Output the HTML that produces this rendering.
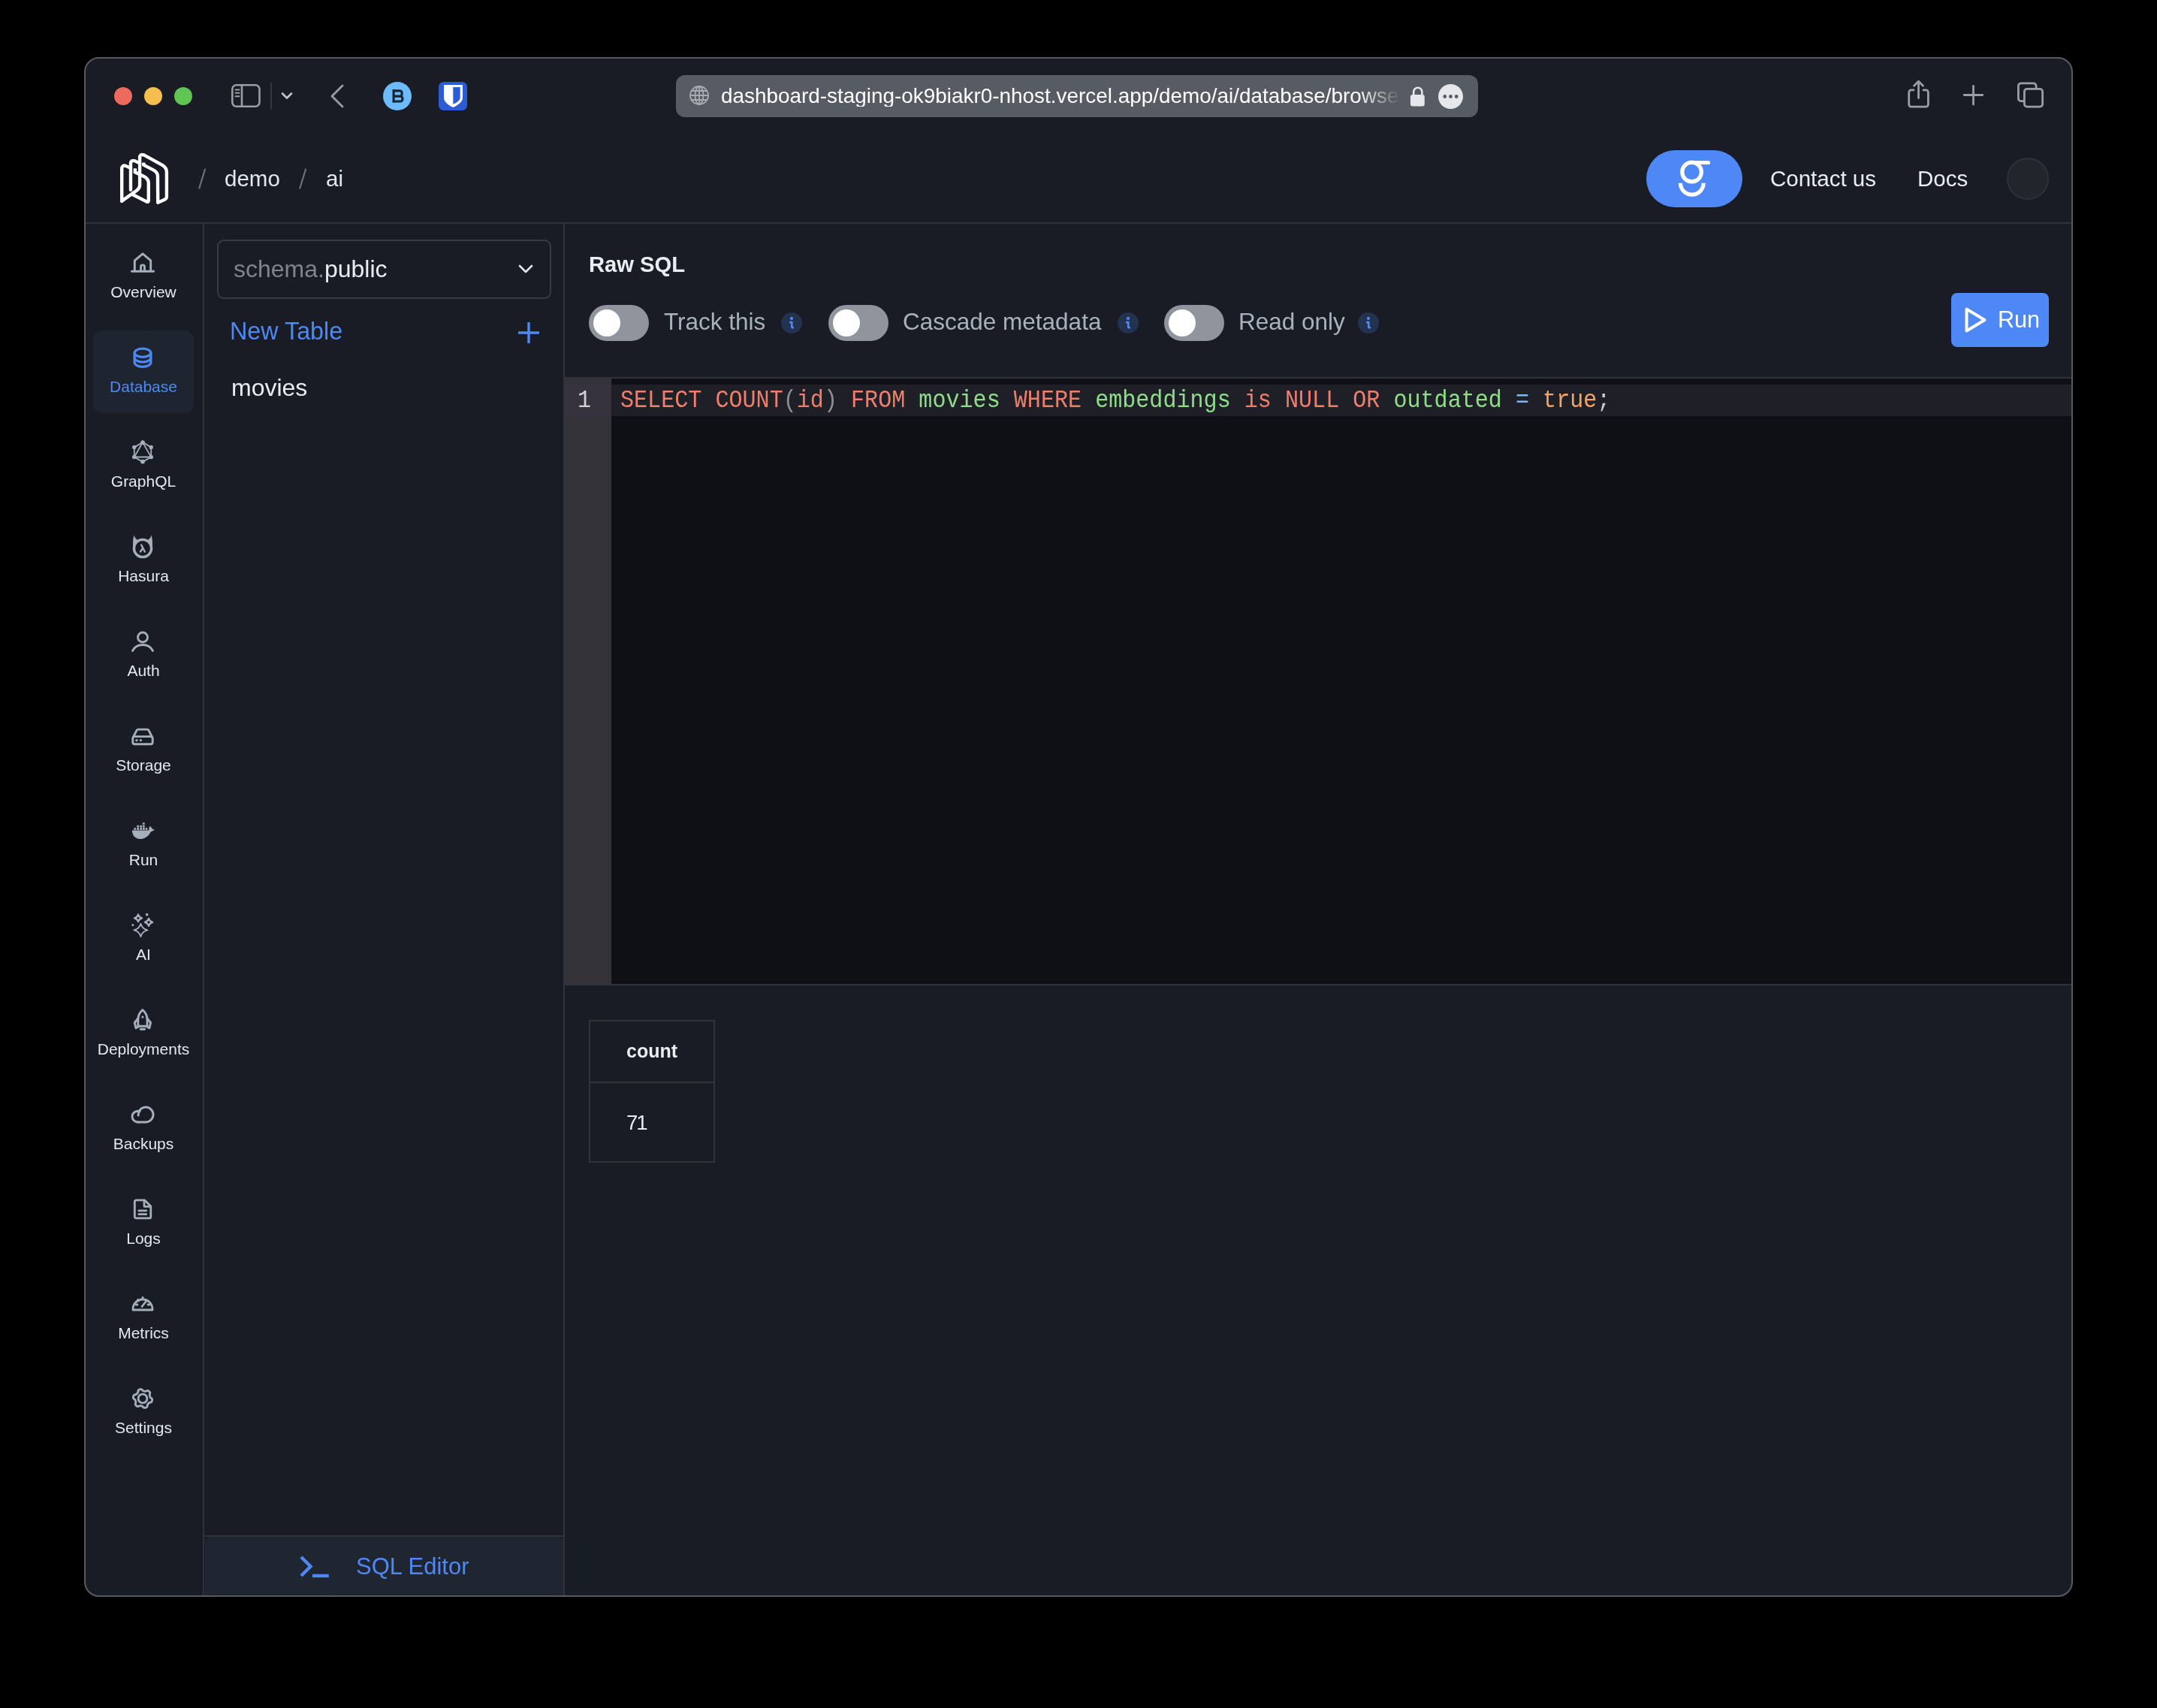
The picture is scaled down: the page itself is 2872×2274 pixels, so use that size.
<!DOCTYPE html>
<html><head><meta charset="utf-8"><style>
html,body{margin:0;padding:0;background:#000;width:2872px;height:2274px;overflow:hidden;position:relative;font-family:'Liberation Sans', sans-serif}
</style></head><body>
<div style="position:absolute;left:112px;top:76px;width:2648px;height:2050px;background:#191c25;border-radius:20px"></div>
<div style="position:absolute;left:152px;top:116px;width:24px;height:24px;background:#ec6a5e;border-radius:50%"></div>
<div style="position:absolute;left:192px;top:116px;width:24px;height:24px;background:#f4bf4f;border-radius:50%"></div>
<div style="position:absolute;left:232px;top:116px;width:24px;height:24px;background:#61c554;border-radius:50%"></div>
<svg style="position:absolute;left:300px;top:100px;" width="60" height="60" viewBox="0 0 60 60" fill="none"><rect x="9.3" y="13.3" width="36.2" height="28.4" rx="5.5" stroke="#9a9da3" stroke-width="2.6"/><line x1="22" y1="13" x2="22" y2="42" stroke="#9a9da3" stroke-width="2.6"/><path d="M13.5 19.6h5M13.5 23.8h5M13.5 28.2h5" stroke="#9a9da3" stroke-width="2" stroke-linecap="round"/></svg>
<div style="position:absolute;left:360px;top:110px;width:2px;height:36px;background:#34373d"></div>
<svg style="position:absolute;left:370px;top:118px;" width="24" height="20" viewBox="0 0 24 20" fill="none"><path d="M6 6.5l6 6 6-6" stroke="#c3c5ca" stroke-width="2.6" stroke-linecap="round" stroke-linejoin="round"/></svg>
<svg style="position:absolute;left:430px;top:105px;" width="40" height="46" viewBox="0 0 40 46" fill="none"><path d="M26 9L12 23l14 14" stroke="#9a9da3" stroke-width="2.8" stroke-linecap="round" stroke-linejoin="round"/></svg>
<div style="position:absolute;left:510px;top:109px;width:38px;height:38px;background:#6cbcfd;border-radius:50%"></div>
<svg style="position:absolute;left:510px;top:109px;" width="38" height="38" viewBox="0 0 38 38" fill="none"><path d="M14.1 10V27.8M14.1 11.8H22.3a2.8 2.8 0 0 1 2.8 2.8v1.8a2.8 2.8 0 0 1-2.8 2.8H14.1M14.1 19.2H23.1a2.8 2.8 0 0 1 2.8 2.8v1.2a2.8 2.8 0 0 1-2.8 2.8H14.1" stroke="#1c2232" stroke-width="3.2" fill="none"/></svg>
<svg style="position:absolute;left:584px;top:109px;" width="38" height="38" viewBox="0 0 38 38" fill="none"><rect width="38" height="38" rx="6.5" fill="#2d5bd6"/><path d="M7 4H32V21C32 27 25 31.5 19.3 34C13.6 31.5 7 27 7 21Z" fill="#fff"/><path d="M19.3 7.1H28.7V20.8C28.7 25 23.5 28 19.3 29.8Z" fill="#2d5bd6"/></svg>
<div style="position:absolute;left:900px;top:100px;width:1068px;height:56px;background:#575b64;border-radius:12px"></div>
<svg style="position:absolute;left:916px;top:112px;" width="30" height="30" viewBox="0 0 30 30" fill="none"><g stroke="#a9acb1" stroke-width="1.8"><circle cx="15" cy="15" r="12"/><ellipse cx="15" cy="15" rx="5.5" ry="12"/><path d="M3 15h24M5 9h20M5 21h20M15 3v24"/></g></svg>
<div style="position:absolute;left:960px;top:114.38px;font-size:27.9px;line-height:27.9px;font-weight:400;color:#ffffff;font-family:'Liberation Sans', sans-serif;white-space:nowrap;will-change:transform;width:905px;overflow:hidden;-webkit-mask-image:linear-gradient(90deg,#000 0,#000 848px,transparent 905px)">dashboard-staging-ok9biakr0-nhost.vercel.app/demo/ai/database/browser</div>
<svg style="position:absolute;left:1874px;top:112px;" width="26" height="32" viewBox="0 0 26 32" fill="none"><path d="M8.2 14.5v-4.2a5.6 5.6 0 0 1 11.2 0v4.2" stroke="#e6e7ea" stroke-width="2.5"/><rect x="4" y="14" width="18.8" height="15.5" rx="3" fill="#e6e7ea"/></svg>
<svg style="position:absolute;left:1915px;top:112px;" width="33" height="33" viewBox="0 0 33 33" fill="none"><circle cx="16.5" cy="16.5" r="16.5" fill="#e6e7ea"/><circle cx="8.8" cy="16.5" r="2.4" fill="#575b64"/><circle cx="16.5" cy="16.5" r="2.4" fill="#575b64"/><circle cx="24.2" cy="16.5" r="2.4" fill="#575b64"/></svg>
<svg style="position:absolute;left:2530px;top:100px;" width="50" height="50" viewBox="0 0 50 50" fill="none"><g stroke="#9a9da3" stroke-width="2.8" stroke-linecap="round" stroke-linejoin="round" fill="none"><path d="M18 19.9h-3.3a3 3 0 0 0-3 3v16.2a3 3 0 0 0 3 3h19.7a3 3 0 0 0 3-3v-16.2a3 3 0 0 0-3-3H31"/><path d="M24.5 30.5V8.5M18.5 14.3l6-6 6 6"/></g></svg>
<svg style="position:absolute;left:2605px;top:105px;" width="45" height="45" viewBox="0 0 45 45" fill="none"><path d="M22.5 9.5v24.5M10.2 21.5h24.5" stroke="#9a9da3" stroke-width="2.8" stroke-linecap="round"/></svg>
<svg style="position:absolute;left:2680px;top:103px;" width="50" height="50" viewBox="0 0 50 50" fill="none"><g stroke="#9a9da3" stroke-width="2.8" fill="none" stroke-linejoin="round"><path d="M15.4 31.6H10.9a3.5 3.5 0 0 1-3.5-3.5V11.4a3.5 3.5 0 0 1 3.5-3.5H27.6a3.5 3.5 0 0 1 3.5 3.5V15.4"/><rect x="15.4" y="15.4" width="24.2" height="23.7" rx="3.5"/></g></svg>
<div style="position:absolute;left:114px;top:296px;width:2644px;height:2px;background:#30333b"></div>
<svg style="position:absolute;left:150px;top:195px;" width="85" height="85" viewBox="0 0 1708 1708" fill="none"><g stroke="#fff" stroke-width="88" stroke-linejoin="round" fill="none"><g stroke-linecap="round"><path d="M245 1460 L245 600 Q245 490 350 520 L470 575"/><path d="M482 1160 L482 460 Q482 355 590 385 L700 440"/><path d="M245 1460 L640 1180 Q725 1120 725 1040 L725 300 Q725 195 840 230 L1330 500 Q1445 565 1445 690 L1445 1340 Q1445 1390 1400 1415 L1210 1500 L1205 800 Q1205 690 1100 635 L830 495"/><path d="M600 690 L840 805 Q960 865 960 985 L960 1450 Q960 1500 905 1475 L545 1290"/></g><path d="M830 500 L830 430 M600 700 L600 590" stroke-linecap="butt"/></g></svg>
<svg style="position:absolute;left:260px;top:220px;" width="20" height="36" viewBox="0 0 20 36" fill="none"><path d="M13 5.5L5.3 30.5" stroke="#6b7079" stroke-width="2.2" stroke-linecap="round"/></svg>
<div style="position:absolute;left:299px;top:223.03px;font-size:29.5px;line-height:29.5px;font-weight:400;color:#dfe7f1;font-family:'Liberation Sans', sans-serif;white-space:nowrap;will-change:transform;">demo</div>
<svg style="position:absolute;left:394px;top:220px;" width="20" height="36" viewBox="0 0 20 36" fill="none"><path d="M13 5.5L5.3 30.5" stroke="#6b7079" stroke-width="2.2" stroke-linecap="round"/></svg>
<div style="position:absolute;left:433.5px;top:223.03px;font-size:29.5px;line-height:29.5px;font-weight:400;color:#dfe7f1;font-family:'Liberation Sans', sans-serif;white-space:nowrap;will-change:transform;">ai</div>
<div style="position:absolute;left:2192px;top:200px;width:128px;height:76px;background:#4e87f6;border-radius:38px"></div>
<svg style="position:absolute;left:2220px;top:205px;" width="70" height="70" viewBox="0 0 70 70" fill="none"><g stroke="#fff" stroke-width="5.2" fill="none"><circle cx="32.6" cy="24" r="12.8"/><path d="M32.6 11.5H54.5" stroke-linecap="round"/><path d="M17.4 38.8a15.4 15.4 0 0 0 30.8 0"/></g></svg>
<div style="position:absolute;left:2356.5px;top:223.03px;font-size:29.5px;line-height:29.5px;font-weight:400;color:#e6edf5;font-family:'Liberation Sans', sans-serif;white-space:nowrap;will-change:transform;">Contact us</div>
<div style="position:absolute;left:2553px;top:223.03px;font-size:29.5px;line-height:29.5px;font-weight:400;color:#e6edf5;font-family:'Liberation Sans', sans-serif;white-space:nowrap;will-change:transform;">Docs</div>
<div style="position:absolute;left:2672px;top:210px;width:56px;height:56px;background:#22252c;border:2px solid #2f3238;border-radius:50%;box-sizing:border-box"></div>
<div style="position:absolute;left:270px;top:298px;width:2px;height:1826px;background:#30333b"></div>
<div style="position:absolute;left:124px;top:440px;width:134px;height:110px;background:#1e2531;border-radius:12px"></div>
<div style="position:absolute;left:112.5px;width:156px;top:378.22px;font-size:21px;line-height:21px;text-align:center;color:#e2e8ef;font-family:'Liberation Sans', sans-serif;white-space:nowrap;will-change:transform">Overview</div>
<div style="position:absolute;left:112.5px;width:156px;top:504.22px;font-size:21px;line-height:21px;text-align:center;color:#4f88f5;font-family:'Liberation Sans', sans-serif;white-space:nowrap;will-change:transform">Database</div>
<div style="position:absolute;left:112.5px;width:156px;top:630.22px;font-size:21px;line-height:21px;text-align:center;color:#e2e8ef;font-family:'Liberation Sans', sans-serif;white-space:nowrap;will-change:transform">GraphQL</div>
<div style="position:absolute;left:112.5px;width:156px;top:756.22px;font-size:21px;line-height:21px;text-align:center;color:#e2e8ef;font-family:'Liberation Sans', sans-serif;white-space:nowrap;will-change:transform">Hasura</div>
<div style="position:absolute;left:112.5px;width:156px;top:882.22px;font-size:21px;line-height:21px;text-align:center;color:#e2e8ef;font-family:'Liberation Sans', sans-serif;white-space:nowrap;will-change:transform">Auth</div>
<div style="position:absolute;left:112.5px;width:156px;top:1008.22px;font-size:21px;line-height:21px;text-align:center;color:#e2e8ef;font-family:'Liberation Sans', sans-serif;white-space:nowrap;will-change:transform">Storage</div>
<div style="position:absolute;left:112.5px;width:156px;top:1134.22px;font-size:21px;line-height:21px;text-align:center;color:#e2e8ef;font-family:'Liberation Sans', sans-serif;white-space:nowrap;will-change:transform">Run</div>
<div style="position:absolute;left:112.5px;width:156px;top:1260.22px;font-size:21px;line-height:21px;text-align:center;color:#e2e8ef;font-family:'Liberation Sans', sans-serif;white-space:nowrap;will-change:transform">AI</div>
<div style="position:absolute;left:112.5px;width:156px;top:1386.22px;font-size:21px;line-height:21px;text-align:center;color:#e2e8ef;font-family:'Liberation Sans', sans-serif;white-space:nowrap;will-change:transform">Deployments</div>
<div style="position:absolute;left:112.5px;width:156px;top:1512.22px;font-size:21px;line-height:21px;text-align:center;color:#e2e8ef;font-family:'Liberation Sans', sans-serif;white-space:nowrap;will-change:transform">Backups</div>
<div style="position:absolute;left:112.5px;width:156px;top:1638.22px;font-size:21px;line-height:21px;text-align:center;color:#e2e8ef;font-family:'Liberation Sans', sans-serif;white-space:nowrap;will-change:transform">Logs</div>
<div style="position:absolute;left:112.5px;width:156px;top:1764.22px;font-size:21px;line-height:21px;text-align:center;color:#e2e8ef;font-family:'Liberation Sans', sans-serif;white-space:nowrap;will-change:transform">Metrics</div>
<div style="position:absolute;left:112.5px;width:156px;top:1890.22px;font-size:21px;line-height:21px;text-align:center;color:#e2e8ef;font-family:'Liberation Sans', sans-serif;white-space:nowrap;will-change:transform">Settings</div>
<svg style="position:absolute;left:174px;top:334px;" width="32" height="32" viewBox="0 0 32 32" fill="none"><path d="M5.3 27V12.8L16 3.8l10.7 9V27" stroke="#a5afbb" stroke-width="2.9" stroke-linejoin="round" fill="none"/><path d="M1.5 27.2h29" stroke="#a5afbb" stroke-width="2.9" stroke-linecap="round"/><path d="M13.5 27V21.2Q13.5 18.9 15.5 18.9H16.4Q18.4 18.9 18.4 21.2V27" stroke="#a5afbb" stroke-width="2.9" fill="none"/></svg>
<svg style="position:absolute;left:174px;top:460px;" width="32" height="32" viewBox="0 0 32 32" fill="none"><g stroke="#4f88f5" stroke-width="3.2" fill="none"><ellipse cx="16" cy="9.8" rx="10.9" ry="5.6"/><path d="M5.1 9.8V22.6a10.9 5.7 0 0 0 21.8 0V9.8"/><path d="M5.1 16.3a10.9 5.7 0 0 0 21.8 0"/></g></svg>
<svg style="position:absolute;left:174px;top:586px;" width="32" height="32" viewBox="0 0 32 32" fill="none"><g stroke="#a5afbb" stroke-width="1.8" fill="none"><path d="M16 2.9L27.2 9.5V22.5L16 28.9 4.8 22.5V9.5z"/><path d="M16 2.9L27.2 22.5H4.8z"/></g><g fill="#a5afbb"><circle cx="16" cy="3.2" r="2.9"/><circle cx="27.2" cy="9.5" r="2.7"/><circle cx="27.2" cy="22.5" r="2.8"/><circle cx="16" cy="28.6" r="2.9"/><circle cx="4.8" cy="22.5" r="2.8"/><circle cx="4.8" cy="9.5" r="2.7"/></g></svg>
<svg style="position:absolute;left:174px;top:712px;" width="32" height="32" viewBox="0 0 32 32" fill="none"><circle cx="16" cy="18" r="11.6" stroke="#a5afbb" stroke-width="3.4" fill="none"/><path d="M4.5 0.5C3 5 2.8 11 3.2 17.5L10.5 7.5C7.5 6.5 5.5 4 4.5 0.5Z M27.5 0.5C29 5 29.2 11 28.8 17.5L21.5 7.5C24.5 6.5 26.5 4 27.5 0.5Z" fill="#a5afbb"/><path d="M13 22.5l3.2-5M14.2 13.5l4.6 9" stroke="#a5afbb" stroke-width="2.4" stroke-linecap="round"/></svg>
<svg style="position:absolute;left:174px;top:838px;" width="32" height="32" viewBox="0 0 32 32" fill="none"><g stroke="#a5afbb" stroke-width="2.8" fill="none" stroke-linecap="round"><circle cx="16" cy="10.5" r="6.5"/><path d="M2.5 28.5C5 23.5 10 20.5 16 20.5s11 3 13.5 8"/></g></svg>
<svg style="position:absolute;left:174px;top:964px;" width="32" height="32" viewBox="0 0 32 32" fill="none"><g stroke="#a5afbb" stroke-width="2.9" fill="none" stroke-linejoin="round"><path d="M3.6 17L8 8.4a2.4 2.4 0 0 1 2.1-1.3H21.9a2.4 2.4 0 0 1 2.1 1.3L28.4 17"/><rect x="2.8" y="16.6" width="26.4" height="10.2" rx="2.6"/></g><circle cx="8" cy="21.6" r="1.7" fill="#a5afbb"/><circle cx="13.4" cy="21.6" r="1.7" fill="#a5afbb"/></svg>
<svg style="position:absolute;left:174px;top:1090px;" width="32" height="32" viewBox="0 0 32 32" fill="none"><path d="M1.9 15.6H24C24.5 13 24.8 11 25.5 9.8C27 11 28.5 12.5 29 14C30 14 31 14 31.8 14.2C30.5 16 28.5 17 26.9 17.2C24 23.5 18 27.1 12.4 27.1C6 27.1 2 22 1.9 15.6Z" fill="#a5afbb"/><g fill="#a5afbb"><rect x="4.4" y="12.1" width="2.6" height="2.8"/><rect x="8.2" y="12.1" width="2.8" height="2.8"/><rect x="12.2" y="12.1" width="2.8" height="2.8"/><rect x="15.9" y="12.1" width="2.8" height="2.8"/><rect x="19.7" y="12.1" width="2.6" height="2.8"/><rect x="8.2" y="8.8" width="2.8" height="2.8"/><rect x="12.2" y="8.8" width="2.8" height="2.8"/><rect x="15.9" y="8.8" width="2.8" height="2.8"/><rect x="15.9" y="5.3" width="2.8" height="2.6"/></g></svg>
<svg style="position:absolute;left:174px;top:1216px;" width="32" height="32" viewBox="0 0 32 32" fill="none"><g stroke="#a5afbb" stroke-width="1.9" fill="none" stroke-linejoin="round"><path d="M13.4 13.799999999999999Q15.200000000000001 20.68 22.4 22.4Q15.200000000000001 24.119999999999997 13.4 31.0Q11.6 24.119999999999997 4.4 22.4Q11.6 20.68 13.4 13.799999999999999Z"/><path d="M10 1.5999999999999996Q11.1 5.266 15.0 6.3Q11.1 7.334 10 11.0Q8.9 7.334 5.0 6.3Q8.9 5.266 10 1.5999999999999996Z" stroke-width="2.4"/><path d="M24 6.9Q25.144 10.8 29.2 11.9Q25.144 13.0 24 16.9Q22.856 13.0 18.8 11.9Q22.856 10.8 24 6.9Z" stroke-width="2.2"/></g><circle cx="21.6" cy="1.7" r="1.8" fill="#a5afbb"/><circle cx="2.9" cy="15.5" r="1.5" fill="#a5afbb"/></svg>
<svg style="position:absolute;left:174px;top:1342px;" width="32" height="32" viewBox="0 0 32 32" fill="none"><g stroke="#a5afbb" stroke-width="2.9" fill="none" stroke-linejoin="round" stroke-linecap="round"><path d="M15.9 2.6C11.5 6 9.8 10.5 9.8 16V24.3H22V16C22 10.5 20.3 6 15.9 2.6Z"/><path d="M9.8 14L5.2 19.5 7 26.8 11 24.3M22 14L26.6 19.5 24.8 26.8 20.8 24.3"/><path d="M13.2 28.3H18.6"/></g><circle cx="15.9" cy="12" r="1.6" fill="#a5afbb"/></svg>
<svg style="position:absolute;left:174px;top:1468px;" width="32" height="32" viewBox="0 0 32 32" fill="none"><g stroke="#a5afbb" stroke-width="3" fill="none" stroke-linecap="round" stroke-linejoin="round"><path d="M9.5 26H20C25.5 26 30 21.5 30 16C30 10.5 25.5 6 20 6C15 6 11 9.6 10.5 13.8C10.3 15 10.2 16 10.2 16.9"/><path d="M9.5 26C5.4 26 2 22.6 2 18.5C2 14.4 5.4 11.5 9.5 11.2C10.5 11.2 11.3 11.3 12.2 11.6"/></g></svg>
<svg style="position:absolute;left:174px;top:1594px;" width="32" height="32" viewBox="0 0 32 32" fill="none"><g stroke="#a5afbb" stroke-width="2.8" fill="none" stroke-linejoin="round"><path d="M7.3 3.8h11.2l8.3 8.3V25.9a2 2 0 0 1-2 2H7.3a2 2 0 0 1-2-2V5.8a2 2 0 0 1 2-2z"/><path d="M18 3.8v8.5h8.5"/><path d="M10.8 17.8h10M10.8 22.6h10" stroke-linecap="round"/></g></svg>
<svg style="position:absolute;left:174px;top:1720px;" width="32" height="32" viewBox="0 0 32 32" fill="none"><g stroke="#a5afbb" stroke-width="2.8" fill="none" stroke-linecap="round" stroke-linejoin="round"><path d="M3 23a13 13 0 1 1 26 0v1H3z"/><path d="M15 19.5l5.5-7"/><path d="M7 17h2M23 17h2M16 7.5v2M9.5 10.5l1.3 1.3"/></g></svg>
<svg style="position:absolute;left:174px;top:1846px;" width="32" height="32" viewBox="0 0 32 32" fill="none"><g stroke="#a5afbb" stroke-width="2.9" fill="none" stroke-linejoin="round"><path d="M28.07 16.00 L28.37 16.43 L28.53 16.88 L28.59 17.32 L28.59 17.77 L28.55 18.21 L28.47 18.65 L28.36 19.08 L28.22 19.50 L28.04 19.91 L27.80 20.29 L27.47 20.63 L27.03 20.91 L26.46 21.10 L25.85 21.24 L25.29 21.36 L24.84 21.53 L24.49 21.73 L24.20 21.96 L23.95 22.21 L23.70 22.47 L23.47 22.72 L23.24 22.99 L23.01 23.25 L22.78 23.54 L22.58 23.85 L22.42 24.22 L22.31 24.68 L22.24 25.25 L22.17 25.87 L22.04 26.45 L21.81 26.92 L21.50 27.29 L21.15 27.57 L20.76 27.79 L20.36 27.97 L19.94 28.13 L19.51 28.25 L19.08 28.34 L18.63 28.38 L18.18 28.37 L17.72 28.25 L17.26 28.00 L16.81 27.61 L16.39 27.15 L16.00 26.73 L15.64 26.42 L15.29 26.22 L14.94 26.08 L14.60 25.99 L14.25 25.91 L13.91 25.83 L13.57 25.76 L13.22 25.69 L12.87 25.64 L12.50 25.63 L12.09 25.67 L11.64 25.80 L11.11 26.03 L10.53 26.28 L9.96 26.45 L9.44 26.49 L8.98 26.41 L8.56 26.24 L8.17 26.02 L7.81 25.76 L7.47 25.48 L7.15 25.17 L6.85 24.83 L6.59 24.47 L6.38 24.07 L6.25 23.62 L6.23 23.09 L6.35 22.51 L6.54 21.91 L6.71 21.36 L6.79 20.90 L6.79 20.49 L6.74 20.12 L6.65 19.78 L6.55 19.44 L6.44 19.11 L6.33 18.77 L6.21 18.44 L6.08 18.11 L5.91 17.78 L5.67 17.45 L5.33 17.12 L4.87 16.78 L4.36 16.41 L3.93 16.00 L3.63 15.57 L3.47 15.12 L3.41 14.68 L3.41 14.23 L3.45 13.79 L3.53 13.35 L3.64 12.92 L3.78 12.50 L3.96 12.09 L4.20 11.71 L4.53 11.37 L4.97 11.09 L5.54 10.90 L6.15 10.76 L6.71 10.64 L7.16 10.47 L7.51 10.27 L7.80 10.04 L8.05 9.79 L8.30 9.53 L8.53 9.28 L8.76 9.01 L8.99 8.75 L9.22 8.46 L9.42 8.15 L9.58 7.78 L9.69 7.32 L9.76 6.75 L9.83 6.13 L9.96 5.55 L10.19 5.08 L10.50 4.71 L10.85 4.43 L11.24 4.21 L11.64 4.03 L12.06 3.87 L12.49 3.75 L12.92 3.66 L13.37 3.62 L13.82 3.63 L14.28 3.75 L14.74 4.00 L15.19 4.39 L15.61 4.85 L16.00 5.27 L16.36 5.58 L16.71 5.78 L17.06 5.92 L17.40 6.01 L17.75 6.09 L18.09 6.17 L18.43 6.24 L18.78 6.31 L19.13 6.36 L19.50 6.37 L19.91 6.33 L20.36 6.20 L20.89 5.97 L21.47 5.72 L22.04 5.55 L22.56 5.51 L23.02 5.59 L23.44 5.76 L23.83 5.98 L24.19 6.24 L24.53 6.52 L24.85 6.83 L25.15 7.17 L25.41 7.53 L25.62 7.93 L25.75 8.38 L25.77 8.91 L25.65 9.49 L25.46 10.09 L25.29 10.64 L25.21 11.10 L25.21 11.51 L25.26 11.88 L25.35 12.22 L25.45 12.56 L25.56 12.89 L25.67 13.23 L25.79 13.56 L25.92 13.89 L26.09 14.22 L26.33 14.55 L26.67 14.88 L27.13 15.22 L27.64 15.59Z"/><circle cx="16" cy="16" r="5.9"/></g></svg>
<div style="position:absolute;left:750px;top:298px;width:2px;height:1826px;background:#30333b"></div>
<div style="position:absolute;left:288.5px;top:318.5px;width:445.5px;height:79.0px;border:2px solid #383b42;border-radius:9px;box-sizing:border-box"></div>
<div style="position:absolute;left:310.7px;top:341.91px;font-size:32px;line-height:32px;font-weight:400;color:#e8edf3;font-family:'Liberation Sans', sans-serif;white-space:nowrap;will-change:transform;"><span style="color:#7e858e">schema.</span>public</div>
<svg style="position:absolute;left:686px;top:348px;" width="28" height="20" viewBox="0 0 28 20" fill="none"><path d="M6 6l8 8 8-8" stroke="#dfe4ea" stroke-width="2.6" stroke-linecap="round" stroke-linejoin="round" fill="none"/></svg>
<div style="position:absolute;left:306px;top:425.16px;font-size:32.3px;line-height:32.3px;font-weight:400;color:#4f88f5;font-family:'Liberation Sans', sans-serif;white-space:nowrap;will-change:transform;">New Table</div>
<svg style="position:absolute;left:686px;top:425px;" width="36" height="36" viewBox="0 0 36 36" fill="none"><path d="M18 4v28M4 18h28" stroke="#4f88f5" stroke-width="3.4"/></svg>
<div style="position:absolute;left:308px;top:499.91px;font-size:32px;line-height:32px;font-weight:400;color:#e8edf3;font-family:'Liberation Sans', sans-serif;white-space:nowrap;will-change:transform;">movies</div>
<div style="position:absolute;left:272px;top:2044px;width:478px;height:2px;background:#30333b"></div>
<div style="position:absolute;left:273px;top:2046px;width:477px;height:78px;background:#1f2531;border-radius:6px 6px 0 0"></div>
<svg style="position:absolute;left:395px;top:2065px;" width="50" height="45" viewBox="0 0 50 45" fill="none"><path d="M6 8l12.5 12.5L6 33" stroke="#4f88f5" stroke-width="4.4" fill="none"/><path d="M21 33h21.8" stroke="#4f88f5" stroke-width="4.4"/></svg>
<div style="position:absolute;left:474px;top:2069.76px;font-size:31px;line-height:31px;font-weight:400;color:#4f88f5;font-family:'Liberation Sans', sans-serif;white-space:nowrap;will-change:transform;">SQL Editor</div>
<div style="position:absolute;left:784px;top:338.28px;font-size:29.2px;line-height:29.2px;font-weight:700;color:#e8edf3;font-family:'Liberation Sans', sans-serif;white-space:nowrap;will-change:transform;">Raw SQL</div>
<div style="position:absolute;left:784px;top:406px;width:80px;height:48px;background:#8f949d;border-radius:24px"></div>
<div style="position:absolute;left:790px;top:412px;width:36px;height:36px;background:#ffffff;border-radius:50%"></div>
<div style="position:absolute;left:884px;top:413.34px;font-size:31.5px;line-height:31.5px;font-weight:400;color:#a8b2bd;font-family:'Liberation Sans', sans-serif;white-space:nowrap;will-change:transform;">Track this</div>
<div style="position:absolute;left:1040px;top:416px;width:28px;height:28px;background:#22324f;border-radius:50%"></div>
<svg style="position:absolute;left:1040px;top:416px;" width="28" height="28" viewBox="0 0 28 28" fill="none"><circle cx="14" cy="7.9" r="2.1" fill="#4f88f5"/><path d="M11 13.1H14.3V19.5Q14.3 20.2 15 20.2H17" stroke="#4f88f5" stroke-width="2.6" fill="none"/></svg>
<div style="position:absolute;left:1103px;top:406px;width:80px;height:48px;background:#8f949d;border-radius:24px"></div>
<div style="position:absolute;left:1109px;top:412px;width:36px;height:36px;background:#ffffff;border-radius:50%"></div>
<div style="position:absolute;left:1202px;top:413.34px;font-size:31.5px;line-height:31.5px;font-weight:400;color:#a8b2bd;font-family:'Liberation Sans', sans-serif;white-space:nowrap;will-change:transform;">Cascade metadata</div>
<div style="position:absolute;left:1488px;top:416px;width:28px;height:28px;background:#22324f;border-radius:50%"></div>
<svg style="position:absolute;left:1488px;top:416px;" width="28" height="28" viewBox="0 0 28 28" fill="none"><circle cx="14" cy="7.9" r="2.1" fill="#4f88f5"/><path d="M11 13.1H14.3V19.5Q14.3 20.2 15 20.2H17" stroke="#4f88f5" stroke-width="2.6" fill="none"/></svg>
<div style="position:absolute;left:1550px;top:406px;width:80px;height:48px;background:#8f949d;border-radius:24px"></div>
<div style="position:absolute;left:1556px;top:412px;width:36px;height:36px;background:#ffffff;border-radius:50%"></div>
<div style="position:absolute;left:1649px;top:413.34px;font-size:31.5px;line-height:31.5px;font-weight:400;color:#a8b2bd;font-family:'Liberation Sans', sans-serif;white-space:nowrap;will-change:transform;">Read only</div>
<div style="position:absolute;left:1808px;top:416px;width:28px;height:28px;background:#22324f;border-radius:50%"></div>
<svg style="position:absolute;left:1808px;top:416px;" width="28" height="28" viewBox="0 0 28 28" fill="none"><circle cx="14" cy="7.9" r="2.1" fill="#4f88f5"/><path d="M11 13.1H14.3V19.5Q14.3 20.2 15 20.2H17" stroke="#4f88f5" stroke-width="2.6" fill="none"/></svg>
<div style="position:absolute;left:2598px;top:390px;width:130px;height:72px;background:#4e87f6;border-radius:8px"></div>
<svg style="position:absolute;left:2610px;top:402px;" width="42" height="48" viewBox="0 0 42 48" fill="none"><path d="M8.5 9.5v29l24-14.5z" stroke="#fff" stroke-width="4" stroke-linejoin="round" fill="none"/></svg>
<div style="position:absolute;left:2659.5px;top:410.30px;font-size:30.6px;line-height:30.6px;font-weight:400;color:#ffffff;font-family:'Liberation Sans', sans-serif;white-space:nowrap;will-change:transform;">Run</div>
<div style="position:absolute;left:752px;top:502px;width:2006px;height:2px;background:#30333b"></div>
<div style="position:absolute;left:752px;top:504px;width:2006px;height:806px;background:#0e1015"></div>
<div style="position:absolute;left:752px;top:504px;width:62px;height:806px;background:#333238"></div>
<div style="position:absolute;left:814px;top:512px;width:1944px;height:42px;background:#1e1f27"></div>
<div style="position:absolute;left:752px;top:512px;width:62px;height:42px;background:#36333e"></div>
<div style="position:absolute;left:768.5px;top:519.00px;font-size:30px;line-height:30px;font-weight:400;color:#d0d2d6;font-family:'Liberation Mono', monospace;white-space:nowrap;will-change:transform;transform:scaleY(1.1);transform-origin:0 23px">1</div>
<div style="position:absolute;left:826.2px;top:518.93px;font-size:30.1px;line-height:30.1px;font-weight:400;color:#c9cbd0;font-family:'Liberation Mono', monospace;white-space:nowrap;will-change:transform;transform:scaleY(1.1);transform-origin:0 23px"><span style="color:#ef7f6d">SELECT COUNT</span><span style="color:#8b9097">(</span><span style="color:#ef7f6d">id</span><span style="color:#8b9097">)</span> <span style="color:#ef7f6d">FROM</span> <span style="color:#8fdd88">movies</span> <span style="color:#ef7f6d">WHERE</span> <span style="color:#8fdd88">embeddings</span> <span style="color:#ef7f6d">is NULL OR</span> <span style="color:#8fdd88">outdated</span> <span style="color:#79b8ff">=</span> <span style="color:#f2a46a">true</span><span style="color:#c9cbd0">;</span></div>
<div style="position:absolute;left:752px;top:1310px;width:2006px;height:2px;background:#30333b"></div>
<div style="position:absolute;left:752px;top:1312px;width:2006px;height:812px;background:#181c24"></div>
<div style="position:absolute;left:784px;top:1358px;width:168px;height:190px;border:2px solid #2f333a;box-sizing:border-box"></div>
<div style="position:absolute;left:786px;top:1440px;width:164px;height:2px;background:#2f333a"></div>
<div style="position:absolute;left:834px;top:1386.84px;font-size:25px;line-height:25px;font-weight:700;color:#e8edf3;font-family:'Liberation Sans', sans-serif;white-space:nowrap;will-change:transform;">count</div>
<div style="position:absolute;left:834px;top:1480.72px;font-size:27.5px;line-height:27.5px;font-weight:400;color:#e8edf3;font-family:'Liberation Sans', sans-serif;white-space:nowrap;will-change:transform;letter-spacing:-2px">71</div>
<div style="position:absolute;left:112px;top:76px;width:2648px;height:2050px;border:2px solid #56595f;border-radius:20px;box-sizing:border-box;box-shadow:0 0 0 150px #000"></div>
</body></html>
